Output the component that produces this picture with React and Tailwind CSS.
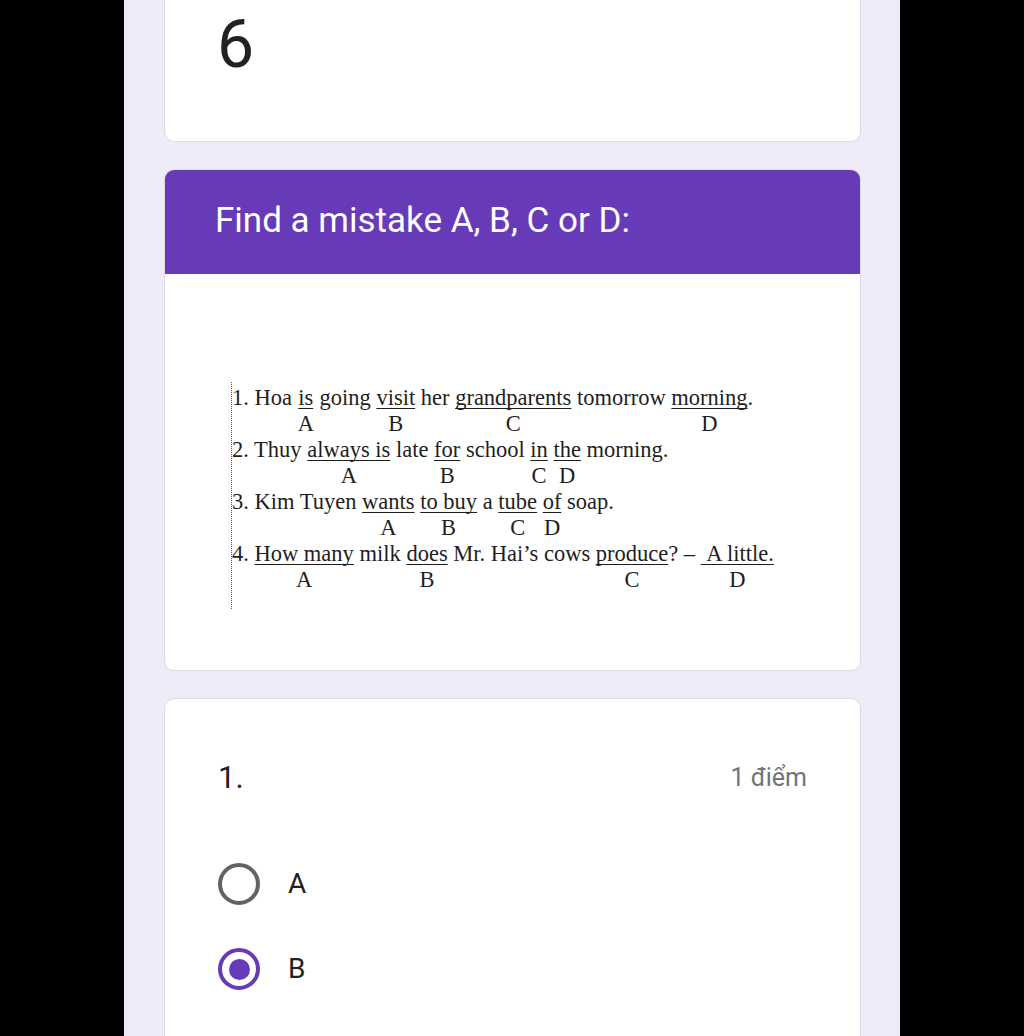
import React from "react";

const lines = [
  [
    "1. Hoa ",
    { w: "is", l: "A" },
    " going ",
    { w: "visit", l: "B" },
    " her ",
    { w: "grandparents", l: "C" },
    " tomorrow ",
    { w: "morning", l: "D" },
    ".",
  ],
  [
    "2. Thuy ",
    { w: "always is", l: "A" },
    " late ",
    { w: "for", l: "B" },
    " school ",
    { w: "in", l: "C" },
    " ",
    { w: "the", l: "D" },
    " morning.",
  ],
  [
    "3. Kim Tuyen ",
    { w: "wants", l: "A" },
    " ",
    { w: "to buy", l: "B" },
    " a ",
    { w: "tube", l: "C" },
    " ",
    { w: "of", l: "D" },
    " soap.",
  ],
  [
    "4. ",
    { w: "How many", l: "A" },
    " milk ",
    { w: "does", l: "B" },
    " Mr. Hai\u2019s cows ",
    { w: "produce", l: "C" },
    "? \u2013 ",
    { w: "\u00a0A little.", l: "D" },
  ],
];

function Radio({ checked }) {
  if (checked) {
    return (
      <span className="flex h-[42px] w-[42px] items-center justify-center rounded-full border-[4px] border-[#673ab7]">
        <span className="h-[21px] w-[21px] rounded-full bg-[#673ab7]" />
      </span>
    );
  }
  return <span className="block h-[42px] w-[42px] rounded-full border-[4px] border-[#5f6368]" />;
}

export default function App() {
  return (
    <div className="flex h-[1036px] justify-center overflow-hidden bg-black font-['Roboto',sans-serif] text-[#202124]">
      <div className="flex w-[776px] flex-col gap-[27px] bg-[#f0ebf8] pl-[40px] pr-[39px]">
        <div className="h-[142px] rounded-b-[10px] border border-t-0 border-[#dadce0] bg-white px-[52px] pt-[9px]">
          <div className="text-[66px] leading-[72px]">6</div>
        </div>

        <div className="overflow-hidden rounded-[10px] border border-[#dadce0] bg-white">
          <div className="-mx-px -mt-px flex h-[105px] items-center bg-[#673ab7] px-[51px] text-[35px] text-white">
            Find a mistake A, B, C or D:
          </div>
          <div className="px-[66px] pb-[61px] pt-[108px]">
            <div className="border-l border-dotted border-[#555] pb-[16px] pt-[3px] font-['Liberation_Serif',serif] text-[22.5px] leading-[26px] text-[#1e1e1e]">
              {lines.map((parts, i) => (
                <div key={i} className="whitespace-pre">
                  {parts.map((p, j) =>
                    typeof p === "string" ? (
                      <span key={j}>{p}</span>
                    ) : (
                      <span key={j} className="inline-flex flex-col items-center align-baseline">
                        <span className="underline decoration-1 underline-offset-[3px] [text-decoration-skip-ink:none]">
                          {p.w}
                        </span>
                        <span>{p.l}</span>
                      </span>
                    )
                  )}
                </div>
              ))}
            </div>
          </div>
        </div>

        <div className="flex-1 rounded-t-[10px] border border-b-0 border-[#dadce0] bg-white px-[53px] pt-[61px]">
          <div className="flex items-center justify-between">
            <span className="text-[31px] leading-[36px]">1.</span>
            <span className="text-[25px] leading-[36px] text-[#70757a]">1 điểm</span>
          </div>
          <div className="mt-[67px] flex flex-col gap-[43px]">
            <div className="flex items-center gap-[28px]">
              <Radio />
              <span className="text-[28px]">A</span>
            </div>
            <div className="flex items-center gap-[28px]">
              <Radio checked />
              <span className="text-[28px]">B</span>
            </div>
          </div>
        </div>
      </div>
    </div>
  );
}
